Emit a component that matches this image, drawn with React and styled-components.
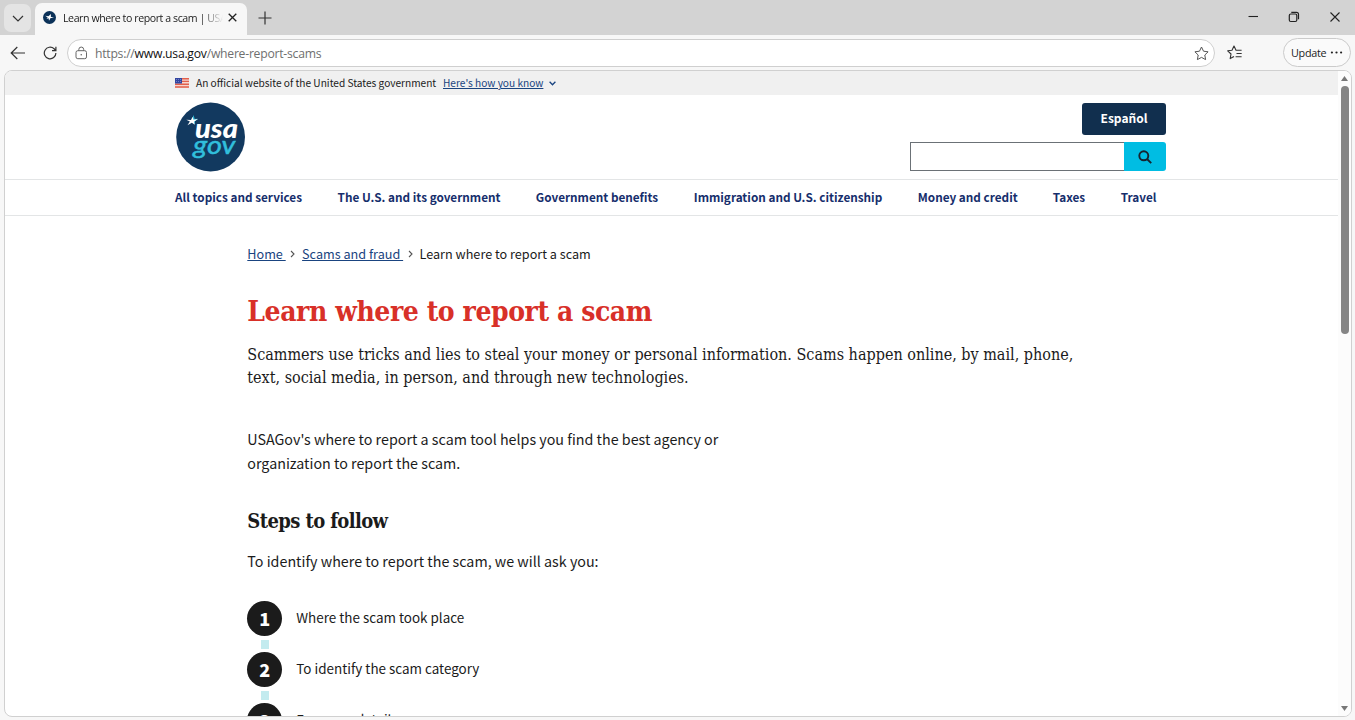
import React from 'react';
import styled, { createGlobalStyle } from 'styled-components';

const navLinks = [
  { label: 'All topics and services', width: 127 },
  { label: 'The U.S. and its government', width: 162.6 },
  { label: 'Government benefits', width: 122.4 },
  { label: 'Immigration and U.S. citizenship', width: 188.4 },
  { label: 'Money and credit', width: 99.5 },
  { label: 'Taxes', width: 32.3 },
  { label: 'Travel', width: 36 },
];

const steps = ['Where the scam took place', 'To identify the scam category', 'For more details'];

const sans = `'Noto Sans CJK SC', 'Open Sans', sans-serif`;
const serif = `'DejaVu Serif Condensed', 'DejaVu Serif', serif`;
const system = `'Open Sans', 'Noto Sans', sans-serif`;

const GlobalStyle = createGlobalStyle`
  * {
    box-sizing: border-box;
  }

  body {
    margin: 0;
    overflow: hidden;
    background: #f7f7f7;
  }

  h1, h2, p, ul, ol {
    margin: 0;
    padding: 0;
  }
`;

const Browser = styled.div`
  width: 1355px;
  height: 720px;
  display: flex;
  flex-direction: column;
  background: #f7f7f7;
  font-family: ${system};
  color: #1b1b1b;
`;

const TabBar = styled.div`
  height: 35px;
  flex: none;
  display: flex;
  align-items: flex-end;
  background: #d3d3d3;
`;

const TabMenu = styled.button`
  width: 27px;
  height: 28px;
  margin: 0 4px 3px 4px;
  padding: 0;
  border: none;
  border-radius: 7px;
  display: flex;
  align-items: center;
  justify-content: center;
  background: #e4e4e4;
`;

const Tab = styled.div`
  width: 212px;
  height: 32px;
  padding: 0 8px 3px 8px;
  border-radius: 7px 7px 0 0;
  display: flex;
  align-items: center;
  background: #f7f7f7;
`;

const TabTitle = styled.span`
  width: 160px;
  margin: 0 5px 0 7px;
  overflow: hidden;
  white-space: nowrap;
  font-size: 10.6px;
  letter-spacing: -0.42px;
  mask-image: linear-gradient(to right, #000 86%, transparent);
`;

const NewTab = styled.div`
  flex: 1;
  height: 32px;
  padding: 0 0 2px 11px;
  display: flex;
  align-items: center;
`;

const WindowButtons = styled.div`
  height: 35px;
  padding: 0 14px 1px 0;
  display: flex;
  align-items: center;
  gap: 29px;
`;

const Toolbar = styled.div`
  height: 35px;
  flex: none;
  padding: 0 4px 0 10px;
  display: flex;
  align-items: center;
`;

const BackIcon = styled.svg`
  margin-right: 18px;
`;

const AddressBar = styled.div`
  width: 1148px;
  height: 28px;
  margin: 1px 12px 0 10px;
  padding: 0 5px 0 7px;
  border: 1px solid #cfcfcf;
  border-radius: 14px;
  display: flex;
  align-items: center;
  background: #fff;
`;

const Url = styled.span`
  flex: 1;
  padding: 0 0 0 7px;
  font-size: 12.2px;
  letter-spacing: -0.25px;
  color: #6f6f6f;

  & > b {
    font-weight: 400;
    color: #111;
  }
`;

const UpdateButton = styled.button`
  width: 68px;
  height: 29px;
  margin: 0 0 0 auto;
  padding: 0 7px;
  border: 1px solid #cbcbcb;
  border-radius: 15px;
  display: flex;
  align-items: center;
  justify-content: space-between;
  font-family: ${system};
  font-size: 10.8px;
  letter-spacing: -0.3px;
  color: #222;
  background: #fafafa;
`;

const Viewport = styled.div`
  height: 647px;
  flex: none;
  margin: 0 3px 0 4px;
  border: 1px solid #d0d0d0;
  border-radius: 8px;
  display: flex;
  overflow: hidden;
  background: #fff;
`;

const Page = styled.div`
  flex: 1;
  overflow: hidden;
  font-family: ${sans};
`;

const Scrollbar = styled.div`
  width: 13px;
  padding: 5px 0 5px;
  display: flex;
  flex-direction: column;
  align-items: center;
  background: #fcfcfc;
`;

const Thumb = styled.div`
  width: 8px;
  height: 248px;
  margin: 5px 0 auto;
  border-radius: 4px;
  background: #858585;
`;

const Banner = styled.div`
  height: 24px;
  padding-left: 170px;
  display: flex;
  align-items: center;
  background: #f0f0f0;
  font-size: 10.15px;
  line-height: 24px;
  white-space: nowrap;
`;

const BannerText = styled.span`
  width: 240px;
  margin: 0 7px;
`;

const BannerLink = styled.a`
  width: 100px;
  margin-right: 6px;
  color: #1a4480;
  text-decoration: underline;
`;

const Header = styled.header`
  height: 85px;
  padding: 7px 172px 0 171px;
  border-bottom: 1px solid #e3e5e6;
  display: flex;
  justify-content: space-between;
`;

const HeaderTools = styled.div`
  display: flex;
  flex-direction: column;
  align-items: flex-end;
  gap: 7px;
  padding-top: 1px;
`;

const LanguageButton = styled.button`
  width: 84px;
  height: 32px;
  padding: 0 0 2px;
  border: none;
  border-radius: 3px;
  font-family: ${sans};
  font-size: 12px;
  font-weight: 700;
  line-height: 30px;
  color: #fff;
  background: #112f4e;
`;

const Search = styled.form`
  display: flex;
  height: 29px;
`;

const SearchInput = styled.input`
  width: 214px;
  border: 1px solid #6b7176;
  border-right: none;
  outline: none;
  background: #fff;
`;

const SearchButton = styled.button`
  width: 42px;
  padding: 0;
  border: none;
  border-radius: 0 3px 3px 0;
  display: flex;
  align-items: center;
  justify-content: center;
  background: #00bde3;
`;

const Nav = styled.nav`
  height: 36px;
  padding: 0 0 3px 170px;
  border-bottom: 1px solid #e3e5e6;
  display: flex;
  align-items: center;
  gap: 35.6px;
`;

const NavLink = styled.a`
  width: ${({ $width }) => $width}px;
  flex: none;
  font-size: 11.75px;
  font-weight: 700;
  line-height: 31px;
  white-space: nowrap;
  color: #162e6c;
`;

const Main = styled.main`
  padding: 27.5px 0 0 242.3px;
`;

const Breadcrumb = styled.div`
  display: flex;
  align-items: center;
  height: 20px;
  font-size: 12.65px;
  line-height: 20px;
  white-space: pre;

  & > a {
    color: #1a4480;
    text-decoration: underline;
  }

  & > svg {
    margin: 0 6.7px 0 4.7px;
  }
`;

const Title = styled.h1`
  margin-top: 29px;
  font-family: ${serif};
  font-size: 28px;
  font-weight: 700;
  letter-spacing: -0.43px;
  line-height: 38px;
  white-space: nowrap;
  color: #d83028;
`;

const Intro = styled.p`
  width: 860px;
  margin-top: 12px;
  font-family: ${serif};
  font-size: 16px;
  line-height: 23px;
  white-space: nowrap;
`;

const Text = styled.p`
  margin-top: ${({ $top }) => $top}px;
  font-size: 14.3px;
  line-height: 24px;
  white-space: nowrap;
`;

const Subtitle = styled.h2`
  margin-top: 31.5px;
  font-family: ${serif};
  font-size: 20px;
  letter-spacing: -0.6px;
  line-height: 30px;
  white-space: nowrap;
`;

const StepList = styled.ol`
  margin-top: 28px;
  list-style: none;
`;

const Step = styled.li`
  height: 51px;
  display: flex;
  gap: 14px;
  font-size: 13.45px;
  line-height: 33px;
`;

const StepMarker = styled.div`
  display: flex;
  flex-direction: column;
  align-items: center;
  gap: 4px;
`;

const StepNumber = styled.div`
  width: 35px;
  height: 35px;
  border-radius: 50%;
  font-size: 18px;
  font-weight: 900;
  line-height: 35px;
  text-align: center;
  color: #fff;
  background: #1b1b1b;
`;

const StepConnector = styled.div`
  width: 8px;
  height: 9px;
  background: #c3ebef;
`;

const Chevron = () => (
  <svg width='5' height='8' viewBox='0 0 5 8' fill='none' stroke='#555' strokeWidth='1.1'>
    <path d='M1 1l3 3-3 3' />
  </svg>
);

const Flag = () => (
  <svg width='14' height='10' viewBox='0 0 14 10'>
    <rect width='14' height='10' fill='#f6d5cf' />
    <path d='M0 .7h14M0 3.4h14M0 6.2h14M0 9h14' stroke='#e2614d' strokeWidth='1.4' />
    <rect width='7' height='5.5' fill='#3346a0' />
    <path d='M1 1.5h5M1 3.5h5' stroke='#8b98d4' strokeWidth='.7' strokeDasharray='1 1' />
  </svg>
);

const Favicon = () => (
  <svg width='13' height='13' viewBox='0 0 13 13'>
    <circle cx='6.5' cy='6.5' r='6.5' fill='#0b3158' />
    <path d='M2.2 4.7l3.2.5L8 3l-.2 2.7 3.2 1.2-3.4.2L6 9.8l-.4-2.5-2.1.8 1.2-1.6z' fill='#fff' />
  </svg>
);

const Logo = () => (
  <svg width='70' height='70' viewBox='0 0 70 70'>
    <circle cx='34.6' cy='35' r='34.4' fill='#12395f' />
    <path d='M16 17.5L17.5 13l1.2 4 3.2-.2-3 2.4.2 3-2.2-1.8z' fill='#2ab7d6' />
    <path d='M10.3 17.7l4.7.2 1.6-3.2.9 3.1 4.5-.7-4 2.6.8 3-3-1.9-4.3 2.4 2.4-3.6z' fill='#fff' />
    <text x='19' y='36.3' fontFamily='Lato, sans-serif' fontSize='26' fontWeight='900' fontStyle='italic' fill='#fff' textLength='43' lengthAdjust='spacingAndGlyphs'>
      usa
    </text>
    <text x='17.3' y='51.6' fontFamily='Lato, sans-serif' fontSize='26' fontStyle='italic' fill='#31bfdc' stroke='#31bfdc' strokeWidth='.5' textLength='42' lengthAdjust='spacingAndGlyphs'>
      gov
    </text>
  </svg>
);

const BrowserTabs = () => (
  <TabBar>
    <TabMenu aria-label='Tab actions'>
      <svg width='12' height='7' viewBox='0 0 12 7' fill='none' stroke='#333' strokeWidth='1.2'>
        <path d='M1 1l5 5 5-5' />
      </svg>
    </TabMenu>
    <Tab>
      <Favicon />
      <TabTitle>Learn where to report a scam | USAGov</TabTitle>
      <svg width='9' height='9' viewBox='0 0 9 9' stroke='#222' strokeWidth='1.3'>
        <path d='M.7.7l7.6 7.6M8.3.7L.7 8.3' />
      </svg>
    </Tab>
    <NewTab>
      <svg width='14' height='14' viewBox='0 0 14 14' stroke='#333' strokeWidth='1.2'>
        <path d='M7 .5v13M.5 7h13' />
      </svg>
    </NewTab>
    <WindowButtons>
      <svg width='12' height='12' viewBox='0 0 12 12' stroke='#222' strokeWidth='1.1'>
        <path d='M1.5 5.5h9.5' />
      </svg>
      <svg width='12' height='12' viewBox='0 0 12 12' fill='none' stroke='#222' strokeWidth='1.2'>
        <rect x='1.3' y='3' width='7.5' height='7.5' rx='1.5' />
        <path d='M3.3 1.3h5.2a2 2 0 0 1 2 2v5' />
      </svg>
      <svg width='12' height='12' viewBox='0 0 12 12' stroke='#222' strokeWidth='1.1'>
        <path d='M1.5 1.5l9 9M10.5 1.5l-9 9' />
      </svg>
    </WindowButtons>
  </TabBar>
);

const BrowserToolbar = () => (
  <Toolbar>
    <BackIcon width='15' height='14' viewBox='0 0 15 14' fill='none' stroke='#333' strokeWidth='1.2'>
      <path d='M7.3 1L1.2 7l6.1 6M1.2 7H15' />
    </BackIcon>
    <svg width='14' height='14' viewBox='0 0 14 14' fill='none' stroke='#333' strokeWidth='1.2'>
      <path d='M12.9 7a5.8 5.8 0 1 1-1.8-4.2L12.8 4.5M12.9.8v3.9H9' />
    </svg>
    <AddressBar>
      <svg width='13' height='14' viewBox='0 0 13 14' fill='none' stroke='#666' strokeWidth='1'>
        <rect x='1' y='4.7' width='10.5' height='8' rx='1.8' />
        <path d='M3.8 4.7V3.5a2.45 2.45 0 0 1 4.9 0v1.2' />
        <circle cx='6.25' cy='8.7' r='.8' fill='#666' stroke='none' />
      </svg>
      <Url>
        https://<b>www.usa.gov</b>/where-report-scams
      </Url>
      <svg width='15' height='15' viewBox='0 0 15 15' fill='none' stroke='#555' strokeWidth='1'>
        <path d='M7.5 1l2 4.2 4.6.6-3.3 3.2.8 4.6-4.1-2.2-4.1 2.2.8-4.6L.9 5.8l4.6-.6z' strokeLinejoin='round' />
      </svg>
    </AddressBar>
    <svg width='16' height='15' viewBox='0 0 16 15' fill='none' stroke='#333' strokeWidth='1.1'>
      <path d='M9.8 5.2H9L7 1 5 5.2l-4.3.6L4 9l-.8 4.6L7 11.5M8.6 5.2h6M9.5 8.5h5.2M8.6 11.8h6' strokeLinejoin='round' />
    </svg>
    <UpdateButton>
      Update
      <svg width='13' height='3' viewBox='0 0 13 3' fill='#222'>
        <circle cx='1.9' cy='1.5' r='1.1' />
        <circle cx='6.5' cy='1.5' r='1.1' />
        <circle cx='11.1' cy='1.5' r='1.1' />
      </svg>
    </UpdateButton>
  </Toolbar>
);

const SiteHeader = () => (
  <>
    <Banner>
      <Flag />
      <BannerText>An official website of the United States government</BannerText>
      <BannerLink>Here's how you know</BannerLink>
      <svg width='7' height='5' viewBox='0 0 7 5' fill='none' stroke='#1a4480' strokeWidth='1.3'>
        <path d='M.6.8l2.9 3 2.9-3' />
      </svg>
    </Banner>
    <Header>
      <Logo />
      <HeaderTools>
        <LanguageButton>Español</LanguageButton>
        <Search>
          <SearchInput aria-label='Search' />
          <SearchButton type='button' aria-label='Search'>
            <svg width='14' height='14' viewBox='0 0 14 14' fill='none' stroke='#16242f' strokeWidth='1.9'>
              <circle cx='5.8' cy='5.8' r='4.5' />
              <path d='M9 9l4.2 4.2' />
            </svg>
          </SearchButton>
        </Search>
      </HeaderTools>
    </Header>
    <Nav>
      {navLinks.map(({ label, width }) => (
        <NavLink key={label} $width={width}>
          {label}
        </NavLink>
      ))}
    </Nav>
  </>
);

const Article = () => (
  <Main>
    <Breadcrumb>
      <a>{'Home '}</a>
      <Chevron />
      <a>{'Scams and fraud '}</a>
      <Chevron />
      <span>Learn where to report a scam</span>
    </Breadcrumb>
    <Title>Learn where to report a scam</Title>
    <Intro>
      Scammers use tricks and lies to steal your money or personal information. Scams happen online, by mail, phone,
      <br />
      text, social media, in person, and through new technologies.
    </Intro>
    <Text $top={38}>
      USAGov's where to report a scam tool helps you find the best agency or
      <br />
      organization to report the scam.
    </Text>
    <Subtitle>Steps to follow</Subtitle>
    <Text $top={12.5}>To identify where to report the scam, we will ask you:</Text>
    <StepList>
      {steps.map((step, index) => (
        <Step key={step}>
          <StepMarker>
            <StepNumber>{index + 1}</StepNumber>
            <StepConnector />
          </StepMarker>
          <span>{step}</span>
        </Step>
      ))}
    </StepList>
  </Main>
);

const App = () => (
  <>
    <GlobalStyle />
    <Browser>
      <BrowserTabs />
      <BrowserToolbar />
      <Viewport>
        <Page>
          <SiteHeader />
          <Article />
        </Page>
        <Scrollbar>
          <svg width='7' height='5' viewBox='0 0 7 5' fill='#777'>
            <path d='M3.5 0L7 5H0z' />
          </svg>
          <Thumb />
          <svg width='7' height='5' viewBox='0 0 7 5' fill='#777'>
            <path d='M3.5 5L7 0H0z' />
          </svg>
        </Scrollbar>
      </Viewport>
    </Browser>
  </>
);

export default App;
